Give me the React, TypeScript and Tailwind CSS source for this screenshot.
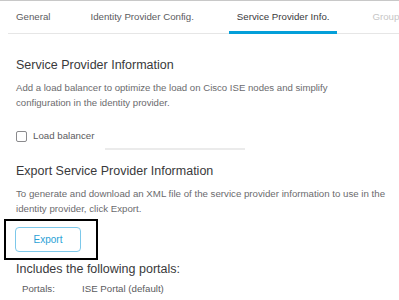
import React from "react";

export default function App() {
  return (
    <div
      className="w-[399px] h-[300px] overflow-hidden bg-white border-t border-[#c8c8c8] text-[#58585b]"
      style={{ fontFamily: '"Liberation Sans", Arial, sans-serif' }}
    >
      <div className="ml-[8px] flex gap-[24px] h-[33px] border-b border-[#e6e6e6] text-[9.7px] whitespace-nowrap">
        <div className="relative px-2 flex items-center text-[#5b5b5e]">General</div>
        <div className="relative pl-2 pr-[11px] flex items-center text-[#5b5b5e]">Identity Provider Config.</div>
        <div className="relative px-2 flex items-center text-[#39393b]">
          Service Provider Info.
          <div className="absolute left-0 right-0 bottom-[-1px] h-[3px] bg-[#049fd9]" />
        </div>
        <div className="relative ml-[3px] px-2 flex items-center text-[#c6c6c6]">Group</div>
      </div>

      <div className="px-4">
        <div className="mt-[24px] text-[12.5px] leading-[14px] text-[#39393b]">Service Provider Information</div>
        <div className="mt-[8px] text-[9.6px] leading-[15px] text-[#6b6b6e]">
          Add a load balancer to optimize the load on Cisco ISE nodes and simplify configuration in the identity provider.
        </div>
        <div className="mt-[19px] flex items-center gap-[6px]">
          <div className="w-[11px] h-[11px] rounded-[2px] border border-[#8a8a8d]" />
          <span className="text-[9.7px] text-[#5b5b5e]">Load balancer</span>
        </div>
        <div className="ml-[89px] mt-[4px] w-[140px] h-[2px] bg-[#ebebeb]" />

        <div className="mt-[14px] text-[12.5px] leading-[14px] text-[#39393b]">Export Service Provider Information</div>
        <div className="mt-[8px] text-[9.7px] leading-[15px] text-[#6b6b6e] whitespace-nowrap">
          To generate and download an XML file of the service provider information to use in the
          <br />
          identity provider, click Export.
        </div>
        <div className="-ml-[12px] mt-[3px] w-[94px] h-[41px] border-[2px] border-black flex items-center pl-[9px]">
          <button className="w-[66px] h-[25px] rounded-[4px] border border-[#7cc8ea] text-[#2a9fd6] text-[10px] flex items-center justify-center bg-white">
            Export
          </button>
        </div>
        <div className="mt-[2px] text-[12.5px] leading-[14px] text-[#39393b]">Includes the following portals:</div>
        <div className="mt-[6px] flex text-[9.7px] text-[#5b5b5e]">
          <span className="ml-[6px] w-[60px]">Portals:</span>
          <span>ISE Portal (default)</span>
        </div>
      </div>
    </div>
  );
}
